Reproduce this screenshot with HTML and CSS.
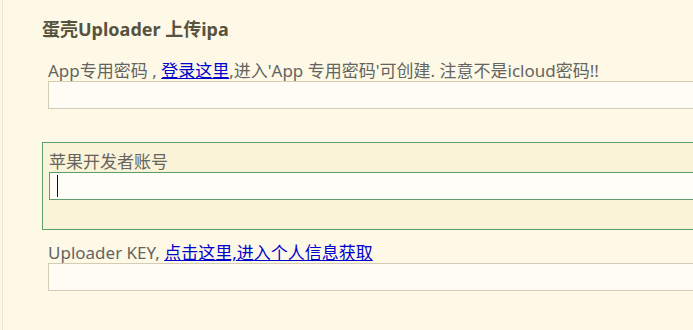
FILE: index.html
```html
<!DOCTYPE html>
<html lang="zh-CN">
<head>
    <meta charset="UTF-8">
    <meta name="viewport" content="width=device-width, initial-scale=1.0">
    <title>蛋壳Uploader 上传ipa</title>
    <link rel="stylesheet" href="styles.css">
</head>
<body>
    <div class="page">
        <h2 class="page-title">蛋壳Uploader 上传ipa</h2>
        <form class="upload-form" autocomplete="off">
            <div class="field">
                <label for="app-password">App专用密码 , <a href="#">登录这里</a>,进入'App 专用密码'可创建. 注意不是icloud密码!!</label>
                <input type="password" id="app-password">
            </div>
            <div class="field focused">
                <label for="apple-id">苹果开发者账号</label>
                <div class="input-wrap">
                    <input type="text" id="apple-id">
                    <span class="caret"></span>
                </div>
            </div>
            <div class="field">
                <label for="uploader-key">Uploader KEY, <a href="#">点击这里,进入个人信息获取</a></label>
                <input type="text" id="uploader-key">
            </div>
        </form>
    </div>
</body>
</html>
```

FILE: styles.css
```css
:root {
    --bg: #fef9e7;
    --input-bg: #fffcf5;
    --input-border: #d4cdb3;
    --focus-bg: #fbf3d7;
    --focus-border: #5d9e6c;
    --text: #646460;
    --title: #57533f;
    --link: #0000cc;
}
html, body {
    margin: 0;
    height: 100%;
    overflow: hidden;
}
body {
    background: var(--bg);
    font-family: "Noto Sans", "Noto Sans CJK SC", sans-serif;
    color: var(--text);
}
.page {
    margin-left: 2px;
    min-height: 100%;
    border-left: 1px solid #ece6cf;
    padding: 17px 0 0 39px;
    box-sizing: border-box;
}
.page-title {
    margin: 0 0 9px;
    font-size: 18px;
    line-height: 25px;
    font-weight: 700;
    color: var(--title);
}
.upload-form {
    display: flex;
    flex-direction: column;
    gap: 3px;
}
.field {
    width: 780px;
    border: 1px solid transparent;
    padding: 9px 0 29px 5px;
}
.field label {
    display: block;
    font-size: 17px;
    line-height: 20px;
    white-space: nowrap;
}
.field a {
    color: var(--link);
    text-decoration: underline;
}
.field input {
    display: block;
    width: 100%;
    height: 28px;
    box-sizing: border-box;
    margin: 0;
    padding: 0 8px;
    border: 1px solid var(--input-border);
    background: var(--input-bg);
    font: inherit;
    outline: none;
}
.field.focused {
    background: var(--focus-bg);
    border-color: var(--focus-border);
    padding-left: 6px;
}
.field.focused input {
    border-color: var(--focus-border);
    background: #fffdf7;
}
.input-wrap {
    position: relative;
}
.caret {
    position: absolute;
    left: 8px;
    top: 3px;
    width: 1px;
    height: 22px;
    background: #111;
}
```
